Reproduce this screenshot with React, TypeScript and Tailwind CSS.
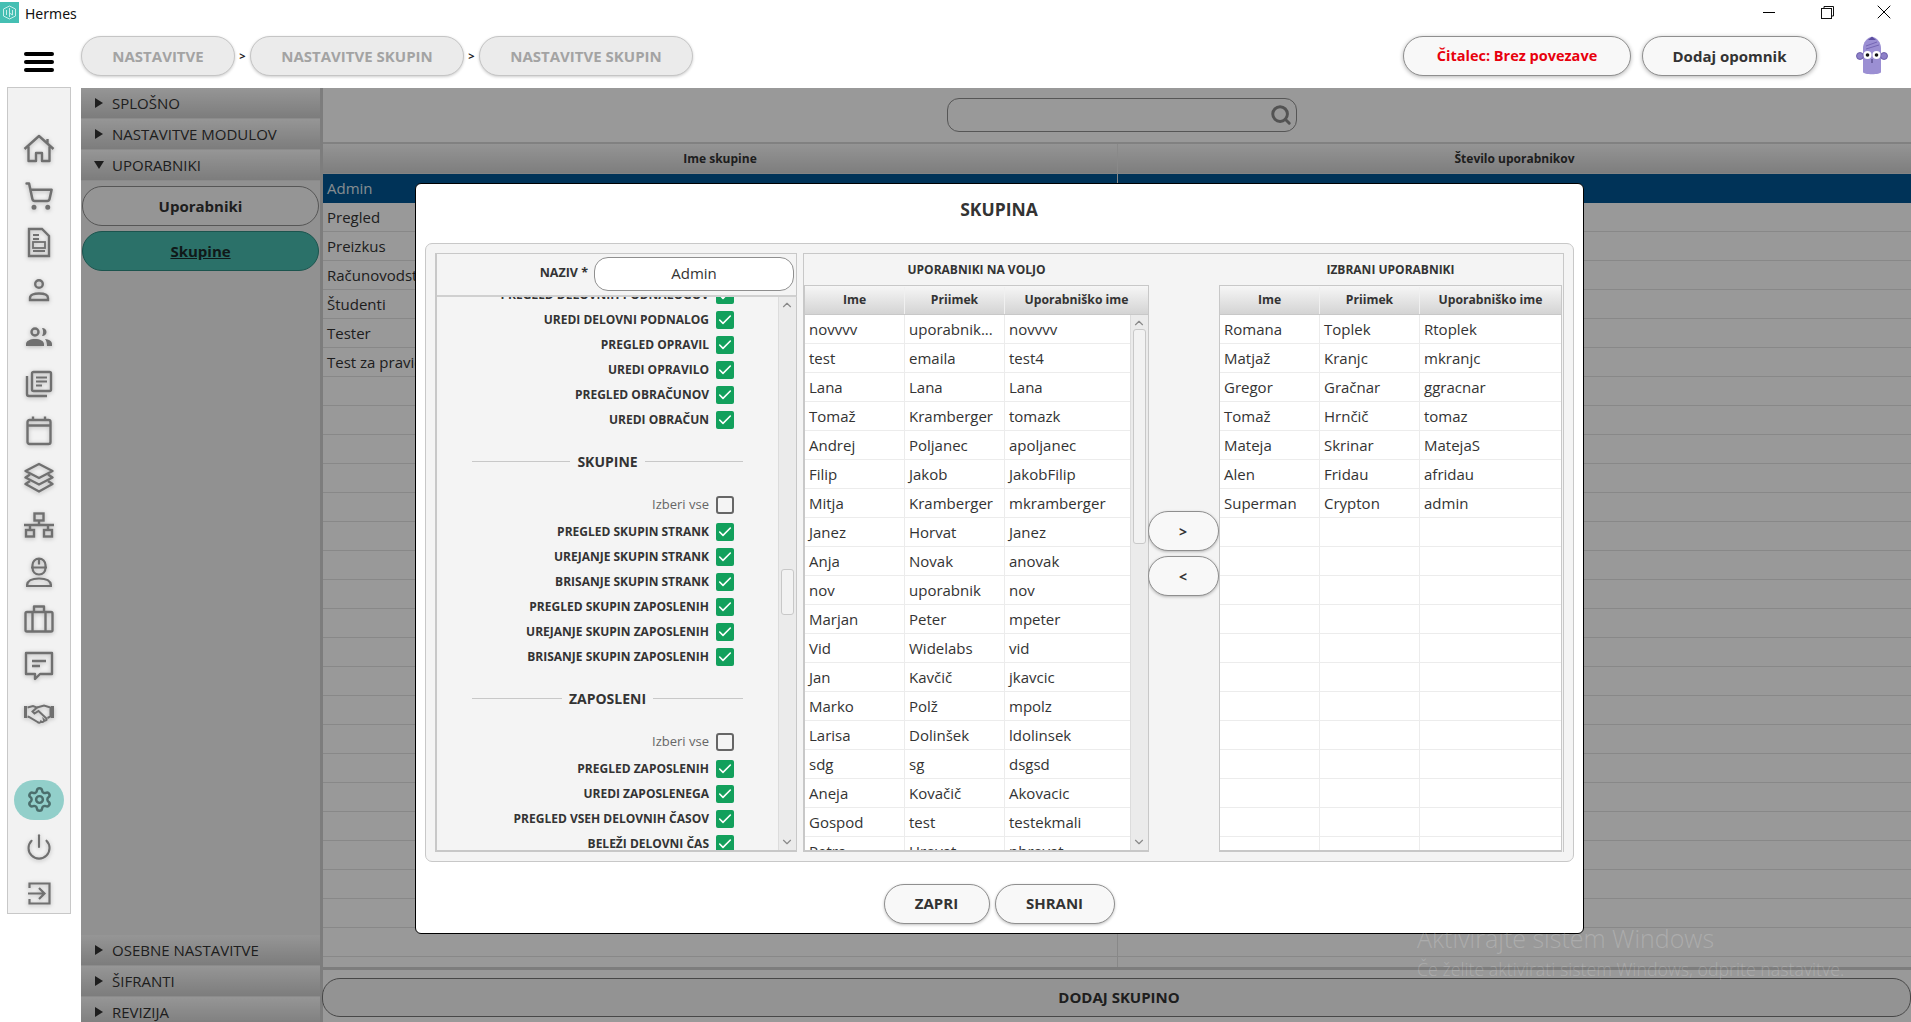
import { ReactNode } from 'react';
import {
  Check,
  ChevronDown,
  ChevronUp,
  Power,
  Search,
  Settings,
  ShoppingCart,
  X,
} from 'lucide-react';

const available = [
  ['novvvv', 'uporabnik...', 'novvvv'],
  ['test', 'emaila', 'test4'],
  ['Lana', 'Lana', 'Lana'],
  ['Tomaž', 'Kramberger', 'tomazk'],
  ['Andrej', 'Poljanec', 'apoljanec'],
  ['Filip', 'Jakob', 'JakobFilip'],
  ['Mitja', 'Kramberger', 'mkramberger'],
  ['Janez', 'Horvat', 'Janez'],
  ['Anja', 'Novak', 'anovak'],
  ['nov', 'uporabnik', 'nov'],
  ['Marjan', 'Peter', 'mpeter'],
  ['Vid', 'Widelabs', 'vid'],
  ['Jan', 'Kavčič', 'jkavcic'],
  ['Marko', 'Polž', 'mpolz'],
  ['Larisa', 'Dolinšek', 'ldolinsek'],
  ['sdg', 'sg', 'dsgsd'],
  ['Aneja', 'Kovačič', 'Akovacic'],
  ['Gospod', 'test', 'testekmali'],
  ['Petra', 'Hrovat', 'phrovat'],
];

const selected = [
  ['Romana', 'Toplek', 'Rtoplek'],
  ['Matjaž', 'Kranjc', 'mkranjc'],
  ['Gregor', 'Gračnar', 'ggracnar'],
  ['Tomaž', 'Hrnčič', 'tomaz'],
  ['Mateja', 'Skrinar', 'MatejaS'],
  ['Alen', 'Fridau', 'afridau'],
  ['Superman', 'Crypton', 'admin'],
  ...Array.from({ length: 12 }, () => ['', '', '']),
];

const groups = ['Admin', 'Pregled', 'Preizkus', 'Računovodstvo', 'Študenti', 'Tester', 'Test za pravice', ...Array.from({ length: 21 }, () => '')];

function NavIcon({ children }: { children: ReactNode }) {
  return (
    <div className="h-[47px] shrink-0 flex items-center justify-center text-[#707070] [filter:drop-shadow(0_1px_2px_rgba(0,0,0,0.25))]">
      {children}
    </div>
  );
}

function Sidebar() {
  return (
    <aside className="w-[64px] h-[827px] ml-[7px] shrink-0 bg-[#f2f2f2] border border-[#c8c8c8] flex flex-col items-stretch pt-[37px]">
      <NavIcon>
        <svg width="32" height="30" viewBox="0 0 32 30" fill="none" stroke="currentColor" strokeWidth="2.4" strokeLinejoin="round">
          <path d="M1.5 15 16 2l14.5 13M5.5 12.5V27h7.5v-8h6v8h7.5V12.5M24.5 5v4.5" />
        </svg>
      </NavIcon>
      <NavIcon><ShoppingCart size={30} strokeWidth={2} /></NavIcon>
      <NavIcon>
        <svg width="24" height="31" viewBox="0 0 24 31" fill="none" stroke="currentColor" strokeWidth="2.4">
          <path d="M2 2h13l7 7v20H2z" />
          <path d="M6 8h6M6 12h6M6 24h12" strokeWidth="1.8" />
          <rect x="6" y="15" width="12" height="6" strokeWidth="1.8" />
        </svg>
      </NavIcon>
      <NavIcon>
        <svg width="22" height="24" viewBox="0 0 22 24" fill="none" stroke="currentColor" strokeWidth="2.4">
          <circle cx="11" cy="6" r="3.8" />
          <path d="M2 22v-2c0-3 4-4.5 9-4.5s9 1.500 9 4.500v2z" />
        </svg>
      </NavIcon>
      <NavIcon>
        <svg width="28" height="22" viewBox="0 0 28 22" fill="currentColor">
          <circle cx="10" cy="6" r="3.500" fill="none" stroke="currentColor" strokeWidth="2.400" />
          <path d="M17 2c3 0 4.500 1.800 4.500 4S20 10 17 10c1.500-2.500 1.500-5.500 0-8zM1 20v-2c0-3 4-5 9-5s9 2 9 5v2zM20 13c4 .5 7 2 7 5v2h-5c0-3-.5-5-2-7z" />
        </svg>
      </NavIcon>
      <NavIcon>
        <svg width="28" height="28" viewBox="0 0 28 28" fill="none" stroke="currentColor" strokeWidth="2.400" strokeLinejoin="round">
          <path d="M2 6v18c0 1 .8 2 2 2h18" />
          <rect x="7" y="2" width="19" height="19" rx="1.500" />
          <path d="M11 7.500h11M11 11.500h11M11 15.500h6" strokeWidth="2" />
        </svg>
      </NavIcon>
      <NavIcon>
        <svg width="26" height="30" viewBox="0 0 26 30" fill="none" stroke="currentColor" strokeWidth="2.400" strokeLinejoin="round">
          <rect x="1.500" y="4" width="23" height="24" rx="2" />
          <path d="M1.500 9.500h23M7 0.500v4M19 0.500v4" />
        </svg>
      </NavIcon>
      <NavIcon>
        <svg width="32" height="32" viewBox="0 0 32 32" fill="none" stroke="currentColor" strokeWidth="2.400" strokeLinejoin="round">
          <path d="M16 2 29.500 9 16 16 2.500 9z" />
          <path d="M7 12.500 2.500 15.500 16 22.500l13.500-7L25 12.500" />
          <path d="M7 19 2.500 22 16 29.500 29.500 22 25 19" />
        </svg>
      </NavIcon>
      <NavIcon>
        <svg width="30" height="26" viewBox="0 0 30 26" fill="none" stroke="currentColor" strokeWidth="2.400">
          <rect x="10.500" y="1.500" width="9" height="7" />
          <path d="M15 8.500V13M0 13h30M6 13v5M24 13v5" />
          <rect x="2" y="18" width="8" height="6.500" />
          <rect x="20" y="18" width="8" height="6.500" />
        </svg>
      </NavIcon>
      <NavIcon>
        <svg width="26" height="30" viewBox="0 0 26 30" fill="none" stroke="currentColor" strokeWidth="2.200">
          <path d="M5 10.500h16M6.500 10.500V8a6.500 6.500 0 0 1 13 0v2.500M13 1.500v6M6.500 10.500c0 4 2.500 7 6.500 7s6.500-3 6.500-7" />
          <path d="M1 29c0-5.500 5-7.500 12-7.500s12 2 12 7.500z" />
        </svg>
      </NavIcon>
      <NavIcon>
        <svg width="30" height="28" viewBox="0 0 30 28" fill="none" stroke="currentColor" strokeWidth="2.400" strokeLinejoin="round">
          <rect x="1.500" y="7" width="27" height="19.500" rx="1.500" />
          <path d="M10 7V1.500h10V7M8.500 7v19.500M21.500 7v19.500" />
        </svg>
      </NavIcon>
      <NavIcon>
        <svg width="30" height="30" viewBox="0 0 30 30" fill="none" stroke="currentColor" strokeWidth="2.400" strokeLinejoin="round">
          <path d="M2 2h26v21H16l-5 5v-5H2z" />
          <path d="M8 10h14M8 15h8" />
        </svg>
      </NavIcon>
      <NavIcon>
        <svg width="30" height="22" viewBox="0 0 30 22" fill="none" stroke="currentColor" strokeWidth="2">
          <path d="M0 4h3v12H0M30 4h-3v12h3" fill="currentColor" stroke="none" />
          <path d="M3.500 5.500 9 4l4 1.500-4.500 4 2 2 4-2.500 8 7.500c.8 2-1.500 2.500-2.500 1.500 .5 2-2 2.500-3 1.500-.5 1.500-2.500 1.500-3.500.500L5 15l-1.500-.5" />
          <path d="M13 5.500 20 3.500l6.500 2v9l-3 1.500" />
        </svg>
      </NavIcon>
      <div className="h-[40px] shrink-0" />
      <div className="h-[47px] shrink-0 flex items-center justify-center">
        <div className="w-[50px] h-[40px] rounded-full bg-[#92cfca] flex items-center justify-center text-[#4b6e6c]">
          <Settings size={27} strokeWidth={2.200} />
        </div>
      </div>
      <NavIcon><Power size={28} strokeWidth={1.800} /></NavIcon>
      <NavIcon>
        <svg width="23" height="23" viewBox="0 0 23 23" fill="none" stroke="currentColor" strokeWidth="2.200">
          <path d="M1.500 6V1.500h20v20h-20V17M0 11.500h16M11 6l5.500 5.500L11 17" />
        </svg>
      </NavIcon>
    </aside>
  );
}

function Crumb({ children, width }: { children: ReactNode; width: string }) {
  return (
    <div className={`${width} h-[40px] rounded-full bg-[#ebebeb] border border-[#c5c5c5] shadow-[0_1px_3px_rgba(0,0,0,0.2)] flex items-center justify-center text-[15px] font-bold text-[#a3a3a3]`}>
      {children}
    </div>
  );
}

function TopPill({ children, width, red }: { children: ReactNode; width: string; red?: boolean }) {
  return (
    <div className={`${width} h-[40px] rounded-full bg-[#f8f8f8] border border-[#8f8f8f] shadow-[0_1px_4px_rgba(0,0,0,0.3)] flex items-center justify-center font-bold ${red ? 'text-[14.500px] text-[#e8000d]' : 'text-[15px] text-[#333]'}`}>
      {children}
    </div>
  );
}

function Mascot() {
  return (
    <svg width="32" height="40" viewBox="0 0 32 40">
      <path d="M7 12c0-5 4-11 9-11s9 6 9 11v24c0 3-18 3-18 0z" fill="#9b8fd3" />
      <path d="M12 4l4-3.500L20 4z" fill="#5d4fa0" />
      <path d="M10 10l11-4M10 13l13-4" stroke="#7566b5" strokeWidth="1" />
      <circle cx="4" cy="20" r="3.500" fill="#8d80c8" stroke="#5d4fa0" strokeWidth="0.800" />
      <circle cx="28" cy="20" r="3.500" fill="#8d80c8" stroke="#5d4fa0" strokeWidth="0.800" />
      <circle cx="11.500" cy="19" r="4" fill="#fff" />
      <circle cx="20.500" cy="19" r="4" fill="#fff" />
      <circle cx="11.500" cy="19" r="1.800" fill="#111" />
      <circle cx="20.500" cy="19" r="1.800" fill="#111" />
      <path d="M16 23v4" stroke="#3e3570" strokeWidth="1" />
    </svg>
  );
}

function Header() {
  return (
    <div className="h-[57px] flex items-start shrink-0">
      <div className="w-[81px] h-[44px] flex flex-col items-center justify-center gap-[4px] pt-[20px] pr-[3px] shrink-0">
        <div className="w-[30px] h-[4px] shrink-0 rounded-full bg-black" />
        <div className="w-[30px] h-[4px] shrink-0 rounded-full bg-black" />
        <div className="w-[30px] h-[4px] shrink-0 rounded-full bg-black" />
      </div>
      <div className="flex items-center mt-[6px]">
        <Crumb width="w-[154px]">NASTAVITVE</Crumb>
        <span className="w-[15px] text-center text-[11px] font-bold text-[#222]">&gt;</span>
        <Crumb width="w-[214px]">NASTAVITVE SKUPIN</Crumb>
        <span className="w-[15px] text-center text-[11px] font-bold text-[#222]">&gt;</span>
        <Crumb width="w-[214px]">NASTAVITVE SKUPIN</Crumb>
      </div>
      <div className="ml-auto flex items-center gap-[11px] mt-[6px] mr-[23px]">
        <TopPill width="w-[228px]" red>Čitalec: Brez povezave</TopPill>
        <TopPill width="w-[175px]">Dodaj opomnik</TopPill>
        <div className="ml-[28px]"><Mascot /></div>
      </div>
    </div>
  );
}

function AccordionHead({ title, open }: { title: string; open?: boolean }) {
  return (
    <div className="h-[31px] shrink-0 bg-gradient-to-b from-[#fafafa] to-[#d0d0d0] border-b border-[#e8e8e8] flex items-center pl-[14px] text-[15px] text-[#333]">
      <span className={open ? 'w-0 h-0 border-x-[5px] border-x-transparent border-t-[8px] border-t-[#333] -ml-[1px] mr-[8px]' : 'w-0 h-0 border-y-[5px] border-y-transparent border-l-[8px] border-l-[#333] mr-[9px]'} />
      {title}
    </div>
  );
}

function Accordion() {
  return (
    <div className="w-[239px] shrink-0 bg-[#f2f2f2] flex flex-col -mb-[6px]">
      <AccordionHead title="SPLOŠNO" />
      <AccordionHead title="NASTAVITVE MODULOV" />
      <AccordionHead title="UPORABNIKI" open />
      <div className="flex-1 flex flex-col gap-[5px] pt-[5px] px-px">
        <div className="h-[40px] rounded-full bg-[#f8f8f8] border border-[#8f8f8f] flex items-center justify-center text-[15px] font-bold text-[#333]">
          Uporabniki
        </div>
        <div className="h-[40px] rounded-full bg-[#48bcaf] border border-[#2f8d83] flex items-center justify-center text-[15px] font-bold underline text-[#1b2b2a]">
          Skupine
        </div>
      </div>
      <AccordionHead title="OSEBNE NASTAVITVE" />
      <AccordionHead title="ŠIFRANTI" />
      <AccordionHead title="REVIZIJA" />
    </div>
  );
}

function GroupsTable() {
  return (
    <div className="flex-1 min-w-0 flex flex-col border-l-[3px] border-[#d0d0d0]">
      <div className="h-[56px] shrink-0 flex justify-center items-center border-b-2 border-[#d8d8d8] pr-[18px]">
        <div className="w-[350px] h-[34px] rounded-[12px] border border-[#8f8f8f] flex items-center justify-end pr-[4px] ml-[28px]">
          <Search size={22} strokeWidth={3.200} className="text-[#8a8a8a]" />
        </div>
      </div>
      <div className="h-[30px] shrink-0 flex bg-gradient-to-b from-[#f8f8f8] to-[#d2d2d2] border-b border-[#ddd] text-[12px] font-bold text-[#333]">
        <div className="w-[795px] flex items-center justify-center border-r border-[#e4e4e4]">Ime skupine</div>
        <div className="flex-1 flex items-center justify-center">Število uporabnikov</div>
      </div>
      <div className="h-[796px] overflow-hidden border-b-[3px] border-[#d0d0d0]">
        {groups.map((name, i) => (
          <div key={i} className={`h-[29px] flex text-[15px] ${i === 0 ? 'bg-[#005593] text-[#dfe8ef]' : 'border-b border-[#e3e3e3] text-[#333]'}`}>
            <div className="w-[795px] pl-[4px] flex items-center border-r border-[#e3e3e3]">{name}</div>
          </div>
        ))}
      </div>
      <div className="flex-1 pt-[8px] -ml-px">
        <div className="h-[39px] rounded-[18px] bg-[#f6f6f6] border border-[#777] flex items-center justify-center pl-[5px] text-[15px] font-bold text-[#333]">
          DODAJ SKUPINO
        </div>
      </div>
    </div>
  );
}

function Permission({ label, plain, checked = true }: { label: string; plain?: boolean; checked?: boolean }) {
  return (
    <div className="h-[18px] flex items-center justify-end gap-[7px] pr-[44px]">
      <span className={plain ? 'text-[13px] text-[#666]' : 'text-[12px] font-bold text-[#333] whitespace-nowrap'}>{label}</span>
      {checked ? (
        <span className="w-[18px] h-[18px] shrink-0 rounded-[2px] bg-[#12a05c] flex items-center justify-center">
          <Check size={16} strokeWidth={2.400} className="text-white" />
        </span>
      ) : (
        <span className="w-[18px] h-[18px] shrink-0 rounded-[3px] border-2 border-[#666] bg-[#f4f4f4]" />
      )}
    </div>
  );
}

function Section({ title, className }: { title: string; className: string }) {
  return (
    <div className={`h-[20px] ml-[35px] w-[271px] flex items-center gap-[7px] text-[14px] font-bold text-[#333] ${className}`}>
      <div className="flex-1 h-px bg-[#c8c8c8]" />
      {title}
      <div className="flex-1 h-px bg-[#c8c8c8]" />
    </div>
  );
}

function Scrollbar({ thumb, top }: { thumb: string; top: string }) {
  return (
    <div className="relative w-[18px] shrink-0 bg-[#ebebeb] border-l border-[#dcdcdc] text-[#8a8a8a]">
      <ChevronUp size={14} className="absolute left-[1px] top-[1px]" />
      <ChevronDown size={14} className="absolute left-[1px] bottom-[1px]" />
      <div className={`absolute left-[2px] right-[2px] ${top} ${thumb} rounded-[3px] bg-[#f2f2f2] border border-[#c8c8c8]`} />
    </div>
  );
}

function PermissionPanel() {
  return (
    <div className="w-[362px] shrink-0 flex flex-col border-2 border-[#c8c8c8] border-t border-r-0">
      <div className="h-[43px] shrink-0 flex items-center justify-end gap-[6px] pr-[2px] pb-[2px] border-b-2 border-[#d0d0d0] border-r border-r-[#c8c8c8]">
        <span className="text-[12.500px] font-bold text-[#333]">NAZIV *</span>
        <div className="w-[200px] h-[34px] rounded-[14px] bg-white border border-[#8f8f8f] flex items-center justify-center text-[15px] text-[#333]">
          Admin
        </div>
      </div>
      <div className="flex-1 min-h-0 flex overflow-hidden border-r border-[#c8c8c8]">
        <div className="flex-1 min-w-0 overflow-hidden">
          <div className="-mt-[11px] flex flex-col">
            <div className="flex flex-col gap-[7px]">
              <Permission label="PREGLED DELOVNIH PODNALOGOV" />
              <Permission label="UREDI DELOVNI PODNALOG" />
              <Permission label="PREGLED OPRAVIL" />
              <Permission label="UREDI OPRAVILO" />
              <Permission label="PREGLED OBRAČUNOV" />
              <Permission label="UREDI OBRAČUN" />
            </div>
            <Section title="SKUPINE" className="mt-[22px] mb-[25px]" />
            <Permission label="Izberi vse" plain checked={false} />
            <div className="flex flex-col gap-[7px] mt-[9px]">
              <Permission label="PREGLED SKUPIN STRANK" />
              <Permission label="UREJANJE SKUPIN STRANK" />
              <Permission label="BRISANJE SKUPIN STRANK" />
              <Permission label="PREGLED SKUPIN ZAPOSLENIH" />
              <Permission label="UREJANJE SKUPIN ZAPOSLENIH" />
              <Permission label="BRISANJE SKUPIN ZAPOSLENIH" />
            </div>
            <Section title="ZAPOSLENI" className="mt-[22px] mb-[25px]" />
            <Permission label="Izberi vse" plain checked={false} />
            <div className="flex flex-col gap-[7px] mt-[9px]">
              <Permission label="PREGLED ZAPOSLENIH" />
              <Permission label="UREDI ZAPOSLENEGA" />
              <Permission label="PREGLED VSEH DELOVNIH ČASOV" />
              <Permission label="BELEŽI DELOVNI ČAS" />
            </div>
          </div>
        </div>
        <Scrollbar top="top-[272px]" thumb="h-[46px]" />
      </div>
    </div>
  );
}

function UserTable({ rows, scroll, width }: { rows: string[][]; scroll?: boolean; width: string }) {
  return (
    <div className={`${width} shrink-0 h-full flex flex-col border-x border-b-2 border-[#c8c8c8] overflow-hidden`}>
      <div className="h-[30px] shrink-0 pt-px grid grid-cols-[100px_100px_1fr] bg-gradient-to-b from-[#f6f6f6] to-[#d4d4d4] border-y border-[#c8c8c8] text-[12.200px] font-bold text-[#333]">
        <div className="flex items-center justify-center border-r border-[#f0f0f0]">Ime</div>
        <div className="flex items-center justify-center border-r border-[#f0f0f0]">Priimek</div>
        <div className="flex items-center justify-center">Uporabniško ime</div>
      </div>
      <div className="flex-1 min-h-0 flex bg-white">
        <div className="flex-1 min-w-0 overflow-hidden">
          {rows.map((row, i) => (
            <div key={i} className="h-[29px] grid grid-cols-[100px_100px_1fr] border-b border-[#ececec] text-[15px] text-[#333]">
              {row.map((cell, j) => (
                <div key={j} className={`pl-[4px] flex items-center whitespace-nowrap ${j < 2 ? 'border-r border-[#ececec]' : ''}`}>
                  {cell}
                </div>
              ))}
            </div>
          ))}
        </div>
        {scroll && <Scrollbar top="top-[14px]" thumb="h-[215px]" />}
      </div>
    </div>
  );
}

function ArrowButton({ children }: { children: ReactNode }) {
  return (
    <div className="w-[71px] h-[40px] shrink-0 rounded-full bg-[#f8f8f8] border border-[#8f8f8f] shadow-[0_1px_3px_rgba(0,0,0,0.25)] flex items-center justify-center text-[14px] font-bold text-[#333]">
      {children}
    </div>
  );
}

function Dialog() {
  return (
    <div className="absolute left-[415px] top-[183px] w-[1169px] h-[751px] z-20 rounded-[6px] bg-white border border-black flex flex-col">
      <div className="h-[59px] shrink-0 flex items-center justify-center pb-[9px] pr-[1px] text-[17.500px] font-bold text-[#333]">SKUPINA</div>
      <div className="h-[619px] shrink-0 mx-[9px] rounded-[7px] bg-[#f4f4f4] border border-[#c8c8c8] px-[9px] pt-[9px] pb-[9px] flex gap-[6px]">
        <PermissionPanel />
        <div className="flex-1 min-w-0 flex flex-col border-t border-r border-[#c8c8c8] border-l border-l-[#c8c8c8]">
          <div className="h-[31px] shrink-0 flex text-[12px] font-bold text-[#333]">
            <div className="w-[345px] flex items-center justify-center">UPORABNIKI NA VOLJO</div>
            <div className="w-[70px]" />
            <div className="w-[343px] flex items-center justify-center">IZBRANI UPORABNIKI</div>
          </div>
          <div className="flex-1 min-h-0 flex">
            <UserTable rows={available} scroll width="w-[345px]" />
            <div className="w-[70px] shrink-0 flex flex-col items-center pt-[226px] pr-[2px] gap-[5px]">
              <ArrowButton>&gt;</ArrowButton>
              <ArrowButton>&lt;</ArrowButton>
            </div>
            <UserTable rows={selected} width="w-[343px]" />
          </div>
        </div>
      </div>
      <div className="flex-1 flex items-center justify-center gap-[5px] pt-[12px] pr-[1px]">
        <div className="w-[106px] h-[40px] rounded-full bg-[#f8f8f8] border border-[#8f8f8f] shadow-[0_1px_3px_rgba(0,0,0,0.25)] flex items-center justify-center text-[15px] font-bold text-[#333]">
          ZAPRI
        </div>
        <div className="w-[120px] h-[40px] rounded-full bg-[#f8f8f8] border border-[#8f8f8f] shadow-[0_1px_3px_rgba(0,0,0,0.25)] flex items-center justify-center text-[15px] font-bold text-[#333]">
          SHRANI
        </div>
      </div>
    </div>
  );
}

export default function App() {
  return (
    <div className="relative w-[1911px] h-[1022px] overflow-hidden bg-white flex flex-col font-['Open_Sans','Noto_Sans',sans-serif]">
      <div className="h-[30px] shrink-0 flex items-start">
        <div className="w-[19px] h-[21px] mt-[2px] bg-[#45bfb3] flex items-center justify-center">
          <svg width="15" height="15" viewBox="0 0 15 15" fill="none" stroke="#d8f3f0" strokeWidth="0.900">
            <path d="M7.500 1 13.500 4v7l-6 3-6-3V4zM4.500 5v5M7.500 3v9M10.500 5v5l-3-2" />
          </svg>
        </div>
        <span className="ml-[6px] mt-[3px] text-[14px] text-[#111] font-['Noto_Sans',sans-serif]">Hermes</span>
        <div className="ml-auto flex items-center text-[#222]">
          <div className="w-[58px] h-[24px] flex items-center justify-center"><div className="w-[12px] h-px bg-black" /></div>
          <div className="w-[58px] h-[24px] flex items-center justify-center">
            <svg width="13" height="13" viewBox="0 0 13 13" fill="none" stroke="#111" strokeWidth="1">
              <rect x="0.500" y="2.500" width="10" height="10" />
              <path d="M3 2.500V.5h9.500V10H10.500" />
            </svg>
          </div>
          <div className="w-[55px] h-[24px] flex items-center justify-center"><X size={24} strokeWidth={1} className="text-black" /></div>
        </div>
      </div>
      <Header />
      <div className="flex-1 min-h-0 flex overflow-hidden">
        <div className="w-[81px] shrink-0"><Sidebar /></div>
        <div className="relative flex-1 min-w-0 flex mt-px">
          <Accordion />
          <GroupsTable />
          <div className="absolute inset-0 -bottom-[6px] bg-black/40" />
        </div>
      </div>
      <Dialog />
      <div className="absolute left-[1417px] top-[922px] z-30 text-white/20 pointer-events-none font-light">
        <div className="text-[25px] leading-[32px]">Aktivirajte sistem Windows</div>
        <div className="text-[17.800px] leading-[22px] mt-[4px]">Če želite aktivirati sistem Windows, odprite nastavitve.</div>
      </div>
    </div>
  );
}
